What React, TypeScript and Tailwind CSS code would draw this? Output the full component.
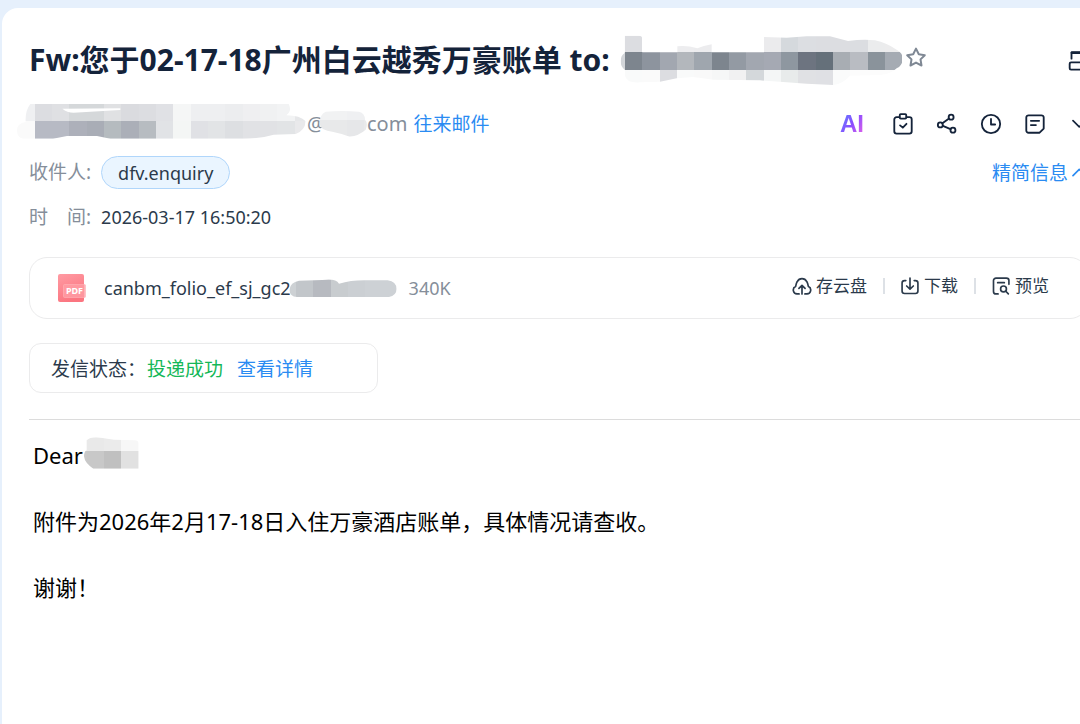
import React, { useId } from 'react';

interface IconProps {
  className?: string;
  children: React.ReactNode;
}

const Icon: React.FC<IconProps> = ({ className = 'size-[22px]', children }) => (
  <svg
    viewBox="0 0 24 24"
    fill="none"
    stroke="currentColor"
    strokeWidth="2"
    strokeLinecap="round"
    strokeLinejoin="round"
    aria-hidden="true"
    className={`shrink-0 ${className}`}
  >
    {children}
  </svg>
);

const StarIcon = () => (
  <Icon className="size-6">
    <path d="M12 2.6l2.8 5.7 6 .9-4.3 4.2 1 6.1-5.5-2.9-5.5 2.900 1-6.1-4.3-4.2 6-.9z" />
  </Icon>
);

const PrintIcon = () => (
  <Icon>
    <path d="M6 10.500V4h13v6.500" />
    <path d="M6.500 4H19" strokeWidth="3" />
    <rect x="4" y="14.500" width="19" height="8" rx="1.500" />
  </Icon>
);

const ClipboardIcon = () => (
  <Icon>
    <path d="M8 4.500H5A2.500 2.500 0 0 0 2.500 7v13A2.500 2.500 0 0 0 5 22.500h14a2.500 2.500 0 0 0 2.500-2.500V7A2.500 2.500 0 0 0 19 4.500h-3" />
    <rect x="8.500" y="1.200" width="7" height="5" rx="1" />
    <path d="M8.800 13.500l3 2.500 4-4.200" />
  </Icon>
);

const ShareIcon = () => (
  <Icon>
    <circle cx="16.500" cy="4.500" r="2.700" />
    <circle cx="4.700" cy="13" r="2.700" />
    <circle cx="18.500" cy="18.700" r="2.700" />
    <path d="M7 11.300l7.200-5.200M7.500 14l8.300 3.600" />
  </Icon>
);

const ClockIcon = () => (
  <Icon>
    <circle cx="12" cy="12" r="10" />
    <path d="M12 6.500v6h4.500" />
  </Icon>
);

const NoteIcon = () => (
  <Icon>
    <path d="M5 2.500h14A2.500 2.500 0 0 1 21.500 5v12L17 21.500H5A2.500 2.500 0 0 1 2.500 19V5A2.500 2.500 0 0 1 5 2.500z" />
    <path d="M7.500 8.500h9M7.500 13.200h5.500" />
  </Icon>
);

const CloudUploadIcon = () => (
  <Icon className="size-5">
    <path d="M8.500 21.500H6a4.600 4.600 0 0 1-1.700-8.800c.4-2 .9-4.400 2-6A6.500 6.500 0 0 1 12 3.200a6.500 6.500 0 0 1 5.700 3.500c1.100 1.600 1.600 4 2 6A4.600 4.600 0 0 1 18 21.500h-2.500" />
    <path d="M12 21.500v-10M8.300 14.800L12 11.200l3.700 3.600" />
  </Icon>
);

const DownloadIcon = () => (
  <Icon className="size-5">
    <path d="M7 5.500H5.500a3 3 0 0 0-3 3V18a3 3 0 0 0 3 3h13a3 3 0 0 0 3-3V8.500a3 3 0 0 0-3-3H17" />
    <path d="M12 2.500v13M8 12l4 3.800 4-3.800" />
  </Icon>
);

const PreviewIcon = () => (
  <Icon className="size-5">
    <path d="M8.500 21.500H6a3 3 0 0 1-3-3V5.500a3 3 0 0 1 3-3h12.500a3 3 0 0 1 3 3V10" />
    <path d="M8 8h8" />
    <circle cx="15" cy="15.500" r="3.500" />
    <path d="M17.800 18.300l3 3.200" />
  </Icon>
);

const PdfIcon = () => (
  <svg viewBox="0 0 28 28" className="size-7 shrink-0" role="img" aria-label="PDF">
    <defs>
      <linearGradient id="pdf-page" x1="0" y1="0" x2="0.4" y2="1">
        <stop offset="0" stopColor="#ff9ba3" />
        <stop offset="1" stopColor="#fb7580" />
      </linearGradient>
    </defs>
    <rect x="0" y="0" width="26" height="28" rx="2" fill="url(#pdf-page)" />
    <rect x="5.500" y="10.500" width="22" height="13" rx="1" fill="#ff9da5" fillOpacity="0.8" stroke="#ffb3b9" strokeWidth="0.6" />
    <text
      x="16.500"
      y="20"
      textAnchor="middle"
      fontFamily="'Noto Sans', sans-serif"
      fontWeight="700"
      fontSize="9"
      fill="#fff"
    >
      PDF
    </text>
  </svg>
);

interface MosaicRow {
  x: number;
  y: number;
  height: number;
  colors: string[];
}

interface MosaicProps {
  width: number;
  height: number;
  outline: string;
  rows: MosaicRow[];
  cell?: number;
  className: string;
}

// Pixelated patch over private text, trimmed to a brush shaped outline
const Mosaic: React.FC<MosaicProps> = ({ width, height, outline, rows, cell = 52, className }) => {
  const id = useId();

  return (
    <svg viewBox={`0 0 ${width} ${height}`} className={`shrink-0 ${className}`} aria-hidden="true">
      <clipPath id={id}>
        <path d={outline} />
      </clipPath>
      <g clipPath={`url(#${id})`} shapeRendering="crispEdges">
        {rows.map((row) =>
          row.colors.map((color, i) => (
            <rect
              key={`${row.y}-${i}`}
              x={row.x + i * cell}
              y={row.y}
              width={cell}
              height={row.height}
              fill={color}
            />
          ))
        )}
      </g>
    </svg>
  );
};

const SubjectMosaic = () => (
  <Mosaic
    className="h-[50px] w-[283px]"
    width={849}
    height={150}
    outline="M14 2H56Q67 2 67 12V52H172V34Q200 30 232 40Q250 32 275 28V52H432V6L500 8L560 4H630L684 18Q730 12 765 16Q800 24 830 44Q848 52 848 74Q846 92 830 100Q812 118 780 120L690 122Q670 146 640 150L560 146L500 142L420 136L280 134L220 126L170 130L120 140L60 142Q20 146 14 120V104Q2 96 2 78Q2 62 14 54Z"
    rows={[
      {
        x: -37, y: 0, height: 52,
        colors: ['#fafafa', '#dcdde1', '#fff', '#fff', '#ededef', '#ececee', '#fff', '#fff', '#fff', '#ebebed', '#d5d9dd', '#dcdee2', '#dcdde1', '#dcdde1', '#dbdde1', '#ebeced', '#ececed'],
      },
      {
        x: -37, y: 52, height: 52,
        colors: ['#d2d5d9', '#7d858e', '#8d949e', '#a2a7b0', '#b3b7bc', '#9fa6ae', '#7d858e', '#939aa3', '#a2a7b0', '#a5a9b3', '#8e97a0', '#6d7480', '#65707a', '#a8adb3', '#b9bcc2', '#8a939b', '#a5abb3'],
      },
      {
        x: -37, y: 104, height: 52,
        colors: ['#fff', '#f9fafa', '#fafafa', '#dcdde1', '#f9fafa', '#f9f9f9', '#f6f7f7', '#f1f1f2', '#d4d8db', '#f4f6f6', '#e8ebeb', '#e0e1e4', '#dfe0e4', '#fafbfb', '#fcfcfc', '#fcfcfc', '#fcfcfc'],
      },
    ]}
  />
);

const SenderMosaic = () => (
  <Mosaic
    className="mb-1.5 h-[35px] w-[290px]"
    width={870}
    height={105}
    outline="M40 0H815Q826 20 808 34Q850 34 866 52Q864 80 836 90L770 92Q730 104 680 104H280L240 96H150L108 104H20Q0 104 0 78Q0 58 26 54Q24 20 40 0ZM136 14Q150 26 170 26L310 18V13Z"
    rows={[
      {
        x: 1, y: 0, height: 52,
        colors: ['#eff0f2', '#dcdde1', '#dfe0e3', '#d5d8da', '#d5d8da', '#e0e1e3', '#dadbdf', '#dcdde1', '#e0e1e5', '#f5f6f6', '#eeeff1', '#eeeff1', '#ecedef', '#efeff1', '#f0f1f2', '#f2f3f4', '#e6e7e9'],
      },
      {
        x: 1, y: 52, height: 53,
        colors: ['#fafafa', '#b7bac4', '#b7bac4', '#adb0ba', '#a9adb6', '#b5bbbf', '#abafb8', '#b7bcc1', '#e1e3e6', '#f4f6f5', '#e0e1e5', '#e2e4e6', '#dddfe2', '#e1e2e5', '#e1e2e5', '#e2e4e6', '#e9e9eb'],
      },
    ]}
  />
);

const DomainMosaic = () => (
  <Mosaic
    className="h-[26px] w-[49px]"
    width={147}
    height={78}
    outline="M20 2Q70-2 120 2Q138 6 138 26Q148 36 140 56Q120 74 92 77Q70 68 40 62Q6 60 2 40Q0 12 20 2Z"
    rows={[
      { x: -20, y: 0, height: 27, colors: ['#f1f2f3', '#f1f2f3', '#eff0f2', '#eff0f2'] },
      { x: -20, y: 27, height: 52, colors: ['#e8e9ea', '#e8e9ea', '#e6e7e9', '#e9eaeb'] },
    ]}
  />
);

const FileNameMosaic = () => (
  <Mosaic
    className="-ml-0.5 h-[19px] w-[108px]"
    width={324}
    height={57}
    outline="M30 5L100 3Q140-3 150 14Q190 2 240 4H296Q322 8 323 30Q322 50 300 54H24Q2 52 1 32Q4 10 30 5Z"
    rows={[
      { x: -31, y: 0, height: 57, colors: ['#cdd1d4', '#c2c6ca', '#b7bac0', '#c8cccf', '#cbcfd3', '#cdd1d5', '#cdd1d5'] },
    ]}
  />
);

const NameMosaic = () => (
  <Mosaic
    className="mb-1.5 ml-px h-[32px] w-[55px]"
    width={165}
    height={96}
    outline="M8 10Q20-2 50 2L90 8L150 10Q164 10 164 20V95H28Q2 78 0 58Q0 44 8 40Z"
    rows={[
      { x: -44, y: 0, height: 42, colors: ['#e9e9e9', '#e9e9e9', '#ebebeb', '#f7f7f7'] },
      { x: -44, y: 42, height: 54, colors: ['#c9c9c9', '#c8c8c8', '#c0c0c0', '#e1e1e1'] },
    ]}
  />
);

const toolbar = [
  { label: '待办', icon: <ClipboardIcon /> },
  { label: '分享', icon: <ShareIcon /> },
  { label: '稍后处理', icon: <ClockIcon /> },
  { label: '备注', icon: <NoteIcon /> },
];

const fileActions = [
  { label: '存云盘', icon: <CloudUploadIcon /> },
  { label: '下载', icon: <DownloadIcon /> },
  { label: '预览', icon: <PreviewIcon /> },
];

const MailHeader = () => (
  <header>
    <div className="flex h-[50px] items-center">
      <h1 className="text-[30px] leading-[50px] font-bold whitespace-nowrap">
        Fw:您于02-17-18广州白云越秀万豪账单 to:
      </h1>
      <div className="ml-2.5">
        <SubjectMosaic />
      </div>
      <button type="button" aria-label="星标" className="mb-1 ml-px text-[#7f8894]">
        <StarIcon />
      </button>
      <button type="button" aria-label="打印" className="ml-auto">
        <PrintIcon />
      </button>
    </div>

    <div className="mt-[15px] flex h-12 items-center">
      <div className="-ml-3 flex items-center text-[20px] whitespace-nowrap text-[#858e9a]">
        <SenderMosaic />
        <span>@</span>
        <span className="-ml-1.5">
          <DomainMosaic />
        </span>
        <span className="-ml-px">com</span>
        <a href="#thread" className="ml-1.5 text-[19px] text-[#2a8bf2]">
          往来邮件
        </a>
      </div>
      <div className="ml-auto flex items-center gap-[22px]">
        <button
          type="button"
          className="mr-1.5 bg-linear-to-br from-[#2f8bff] via-[#8a4bff] to-[#ff5be0] bg-clip-text font-['Liberation_Sans',sans-serif] text-[24px] font-bold text-transparent"
        >
          AI
        </button>
        {toolbar.map((item) => (
          <button key={item.label} type="button" aria-label={item.label}>
            {item.icon}
          </button>
        ))}
        <button type="button" aria-label="更多">
          <Icon className="size-5">
            <path d="M6 8l7.500 7.500L21 8" />
          </Icon>
        </button>
      </div>
    </div>
  </header>
);

const MailMeta = () => (
  <section className="mt-2">
    <div className="flex h-[33px] items-center">
      <span className="text-[19px] text-[#858e9a]">收件人:</span>
      <button
        type="button"
        className="ml-2.5 h-[33px] rounded-full border border-[#b0d6fb] bg-[#eaf5ff] px-4 pt-0.5 text-[18px] text-[#2b3a4b]"
      >
        dfv.enquiry
      </button>
      <button type="button" className="ml-auto flex items-center pt-0.5 text-[19px] text-[#2a8bf2]">
        精简信息
        <Icon className="size-5">
          <path d="M6 14l7.500-7.500L21 14" />
        </Icon>
      </button>
    </div>
    <div className="mt-3 flex h-8 items-center">
      <span className="text-[19px] text-[#858e9a]">时　间:</span>
      <time className="ml-2.5 text-[18px] text-[#2b3a4b]">2026-03-17 16:50:20</time>
    </div>
  </section>
);

const Attachment = () => (
  <section className="mt-6 flex h-[62px] items-center rounded-[18px] border border-[#ebebec] pr-[38px] pl-7">
    <PdfIcon />
    <span className="ml-[18px] text-[18px] text-[#2b3a4b]">canbm_folio_ef_sj_gc2</span>
    <FileNameMosaic />
    <span className="ml-3 text-[18px] text-[#858e9a]">340K</span>
    <div className="mb-1 ml-auto flex items-center">
      {fileActions.map((action, i) => (
        <React.Fragment key={action.label}>
          {i > 0 && <span className="mr-[15px] ml-4 h-4 w-0.5 bg-[#dde1e6]" />}
          <button type="button" className="flex items-center gap-1 text-[17px] text-[#2b3a4b]">
            {action.icon}
            {action.label}
          </button>
        </React.Fragment>
      ))}
    </div>
  </section>
);

const DeliveryStatus = () => (
  <section className="mt-6 flex h-[50px] w-[349px] items-center rounded-xl border border-[#ebebec] px-[21px] pt-0.5 text-[19px] text-[#2b3a4b]">
    <span>发信状态：</span>
    <span className="ml-px text-[#14b858]">投递成功</span>
    <a href="#detail" className="ml-3.5 text-[#2a8bf2]">
      查看详情
    </a>
  </section>
);

const MailBody = () => (
  <article className="mt-[26px] border-t border-[#dcdcdc] px-1 pt-[19px] text-[22px] leading-[33px] text-black">
    <div className="flex h-[33px] items-center">
      <span>Dear</span>
      <NameMosaic />
    </div>
    <p className="mt-[33px]">附件为2026年2月17-18日入住万豪酒店账单，具体情况请查收。</p>
    <p className="mt-[33px]">谢谢！</p>
  </article>
);

const App = () => {
  return (
    <div className="flex min-h-screen overflow-hidden bg-[#e6f0fc] pt-2 pl-0.5 font-['Noto_Sans','Noto_Sans_CJK_SC',sans-serif] text-[#14233a]">
      <main className="-mr-2 grow rounded-tl-[16px] bg-white pt-[27px] pl-[27px]">
        <MailHeader />
        <MailMeta />
        <Attachment />
        <DeliveryStatus />
        <MailBody />
      </main>
    </div>
  );
};

export default App;
